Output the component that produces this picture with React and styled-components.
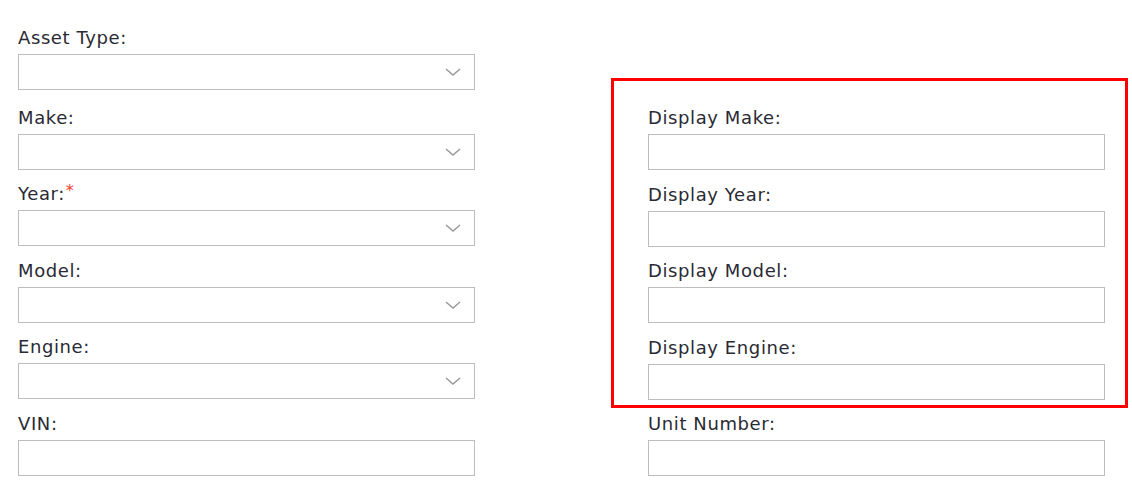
import React from 'react'
import styled, { createGlobalStyle } from 'styled-components'

const GlobalStyle = createGlobalStyle`
  body {
    margin: 0;
    background: #fff;
    font-family: "DejaVu Sans", "Open Sans", sans-serif;
  }
`

const leftFields = [
  { label: 'Asset Type:', select: true },
  { label: 'Make:', select: true },
  { label: 'Year:', select: true, required: true },
  { label: 'Model:', select: true },
  { label: 'Engine:', select: true },
  { label: 'VIN:' }
]

const displayFields = ['Display Make:', 'Display Year:', 'Display Model:', 'Display Engine:']

const Chevron = () => (
  <svg width='16' height='8' viewBox='0 0 16 8'>
    <polyline points='1,1 8,7 15,1' fill='none' stroke='#999' strokeWidth='1.5' />
  </svg>
)

const FormField = ({ label, select, required }) => (
  <Field>
    <Label>
      {label}
      {required && <Star>*</Star>}
    </Label>
    {select ? <SelectBox><Chevron /></SelectBox> : <TextInput type='text' />}
  </Field>
)

export default function App () {
  return (
    <>
      <GlobalStyle />
      <Form>
        <Column $top='24.5px' $first='3.5px'>
          {leftFields.map((f, i) => (
            <FormField key={i} {...f} />
          ))}
        </Column>
        <Column $top='105px'>
          <Highlight>
            {displayFields.map((l) => (
              <FormField key={l} label={l} />
            ))}
          </Highlight>
          <FormField label='Unit Number:' />
        </Column>
      </Form>
    </>
  )
}

const Form = styled.div`
  display: flex;
  gap: 173px;
  padding-left: 18px;
`

const Column = styled.div`
  display: flex;
  flex-direction: column;
  gap: 11.5px;
  width: 457px;
  padding-top: ${(p) => p.$top};

  & > div:first-child {
    margin-bottom: ${(p) => p.$first || '0'};
  }
`

const Highlight = styled.div`
  position: relative;
  display: flex;
  flex-direction: column;
  gap: 11.5px;

  &::after {
    content: '';
    position: absolute;
    top: -27px;
    left: -37px;
    right: -23px;
    bottom: -8px;
    border: 3px solid #ff0000;
    pointer-events: none;
  }
`

const Field = styled.div`
  display: flex;
  flex-direction: column;
`

const Label = styled.label`
  display: block;
  font-size: 18px;
  line-height: 22px;
  letter-spacing: 0.6px;
  color: #2a2a33;
  padding-top: 2px;
  margin-bottom: 5px;
`

const Star = styled.span`
  color: #f0402f;
  font-size: 16px;
  vertical-align: top;
  line-height: 16px;
  margin-left: 1px;
`

const SelectBox = styled.div`
  box-sizing: border-box;
  height: 36px;
  border: 1px solid #bdbdbd;
  background: #fff;
  display: flex;
  align-items: center;
  justify-content: flex-end;
  padding-right: 13px;
`

const TextInput = styled.input`
  box-sizing: border-box;
  height: 36px;
  width: 100%;
  border: 1px solid #bdbdbd;
  margin: 0;
  padding: 0 10px;
  font: inherit;
  &:focus {
    outline: none;
  }
`
